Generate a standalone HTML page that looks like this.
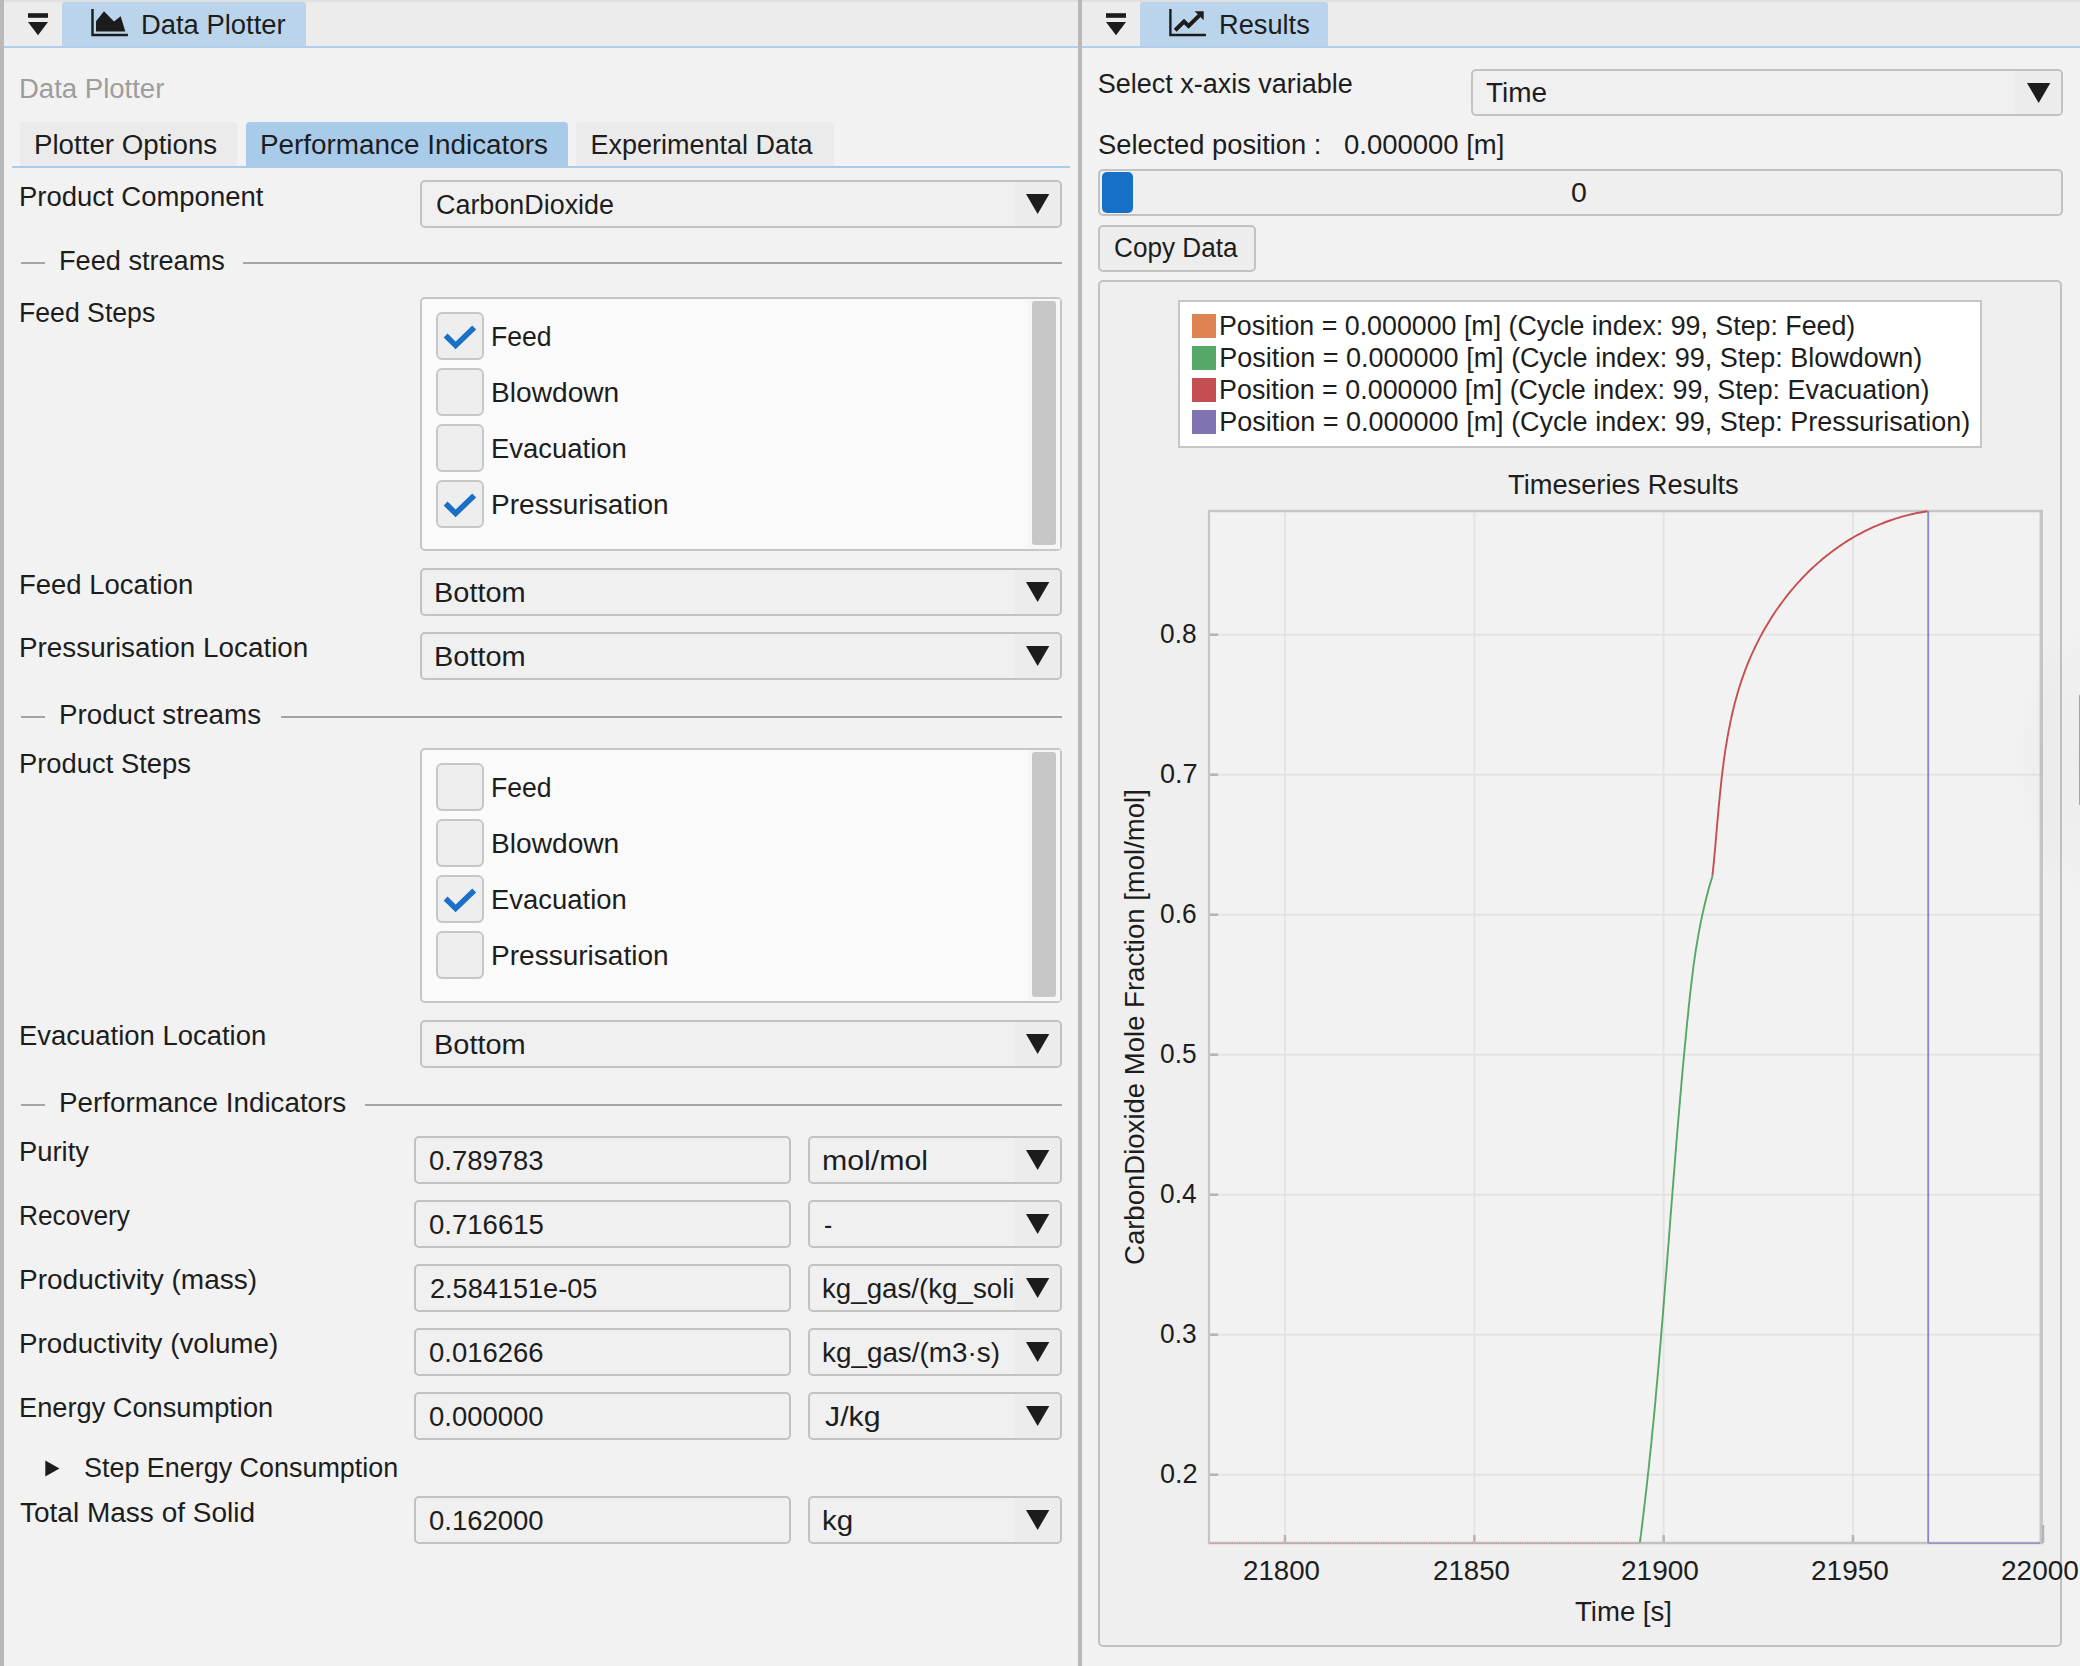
<!DOCTYPE html><html><head><meta charset="utf-8"><style>
html,body{margin:0;padding:0;width:2080px;height:1666px;overflow:hidden;background:#f2f2f2;position:relative;}
.t{position:absolute;font-family:"Liberation Sans",sans-serif;font-size:27px;line-height:30px;white-space:pre;color:#1d1d1d;transform-origin:0 0;}
</style></head><body>
<div style="position:absolute;left:0px;top:0px;width:2080px;height:46px;background:#ececec;"></div>
<div style="position:absolute;left:0px;top:0px;width:2080px;height:1.5px;background:#e0e0e0;"></div>
<div style="position:absolute;left:0px;top:46px;width:2080px;height:2px;background:#b0cfea;"></div>
<div style="position:absolute;left:0px;top:0px;width:3.5px;height:1666px;background:#b9b9b9;"></div>
<div style="position:absolute;left:1078px;top:0px;width:3.7px;height:1666px;background:#b9b9b9;"></div>
<svg width="20" height="24" viewBox="0 0 20 24" style="position:absolute;left:28px;top:13px"><rect x="0" y="0.2" width="20" height="4.6" fill="#1c1c1c"/><path d="M0 9H20L10 22.2Z" fill="#1c1c1c"/></svg>
<div style="position:absolute;left:62px;top:2px;width:244px;height:44px;background:#bad5eb;border-radius:3px 3px 0 0;"></div>
<svg width="40" height="30" viewBox="0 0 40 30" style="position:absolute;left:90px;top:8px"><path d="M2.5 1V27H37.9" fill="none" stroke="#1c1c1c" stroke-width="2.4"/><path d="M6 13.3L14 3.25L24 13.6L30.7 8.2L35.3 23.4H6Z" fill="#1c1c1c"/></svg>
<span class="t" style="left:140.97px;top:9.70px;transform:scaleX(1.0143);">Data Plotter</span>
<svg width="20" height="24" viewBox="0 0 20 24" style="position:absolute;left:1106px;top:13px"><rect x="0" y="0.2" width="20" height="4.6" fill="#1c1c1c"/><path d="M0 9H20L10 22.2Z" fill="#1c1c1c"/></svg>
<div style="position:absolute;left:1140px;top:2px;width:188px;height:44px;background:#bad5eb;border-radius:3px 3px 0 0;"></div>
<svg width="40" height="30" viewBox="0 0 40 30" style="position:absolute;left:1168px;top:8px"><path d="M2.4 1V27H37.9" fill="none" stroke="#1c1c1c" stroke-width="2.4"/><path d="M7.2 22.2L16 13.6L20.6 18L31.2 7.6" fill="none" stroke="#1c1c1c" stroke-width="4"/><path d="M26.6 3.2H35.7V12.3Z" fill="#1c1c1c"/></svg>
<span class="t" style="left:1218.98px;top:9.70px;transform:scaleX(1.0080);">Results</span>
<span class="t" style="left:18.76px;top:73.70px;color:#9d9d9d;transform:scaleX(1.0193);">Data Plotter</span>
<div style="position:absolute;left:20px;top:122px;width:217px;height:44px;background:#ebebeb;border-radius:4px 4px 0 0;"></div>
<div style="position:absolute;left:246px;top:122px;width:322px;height:44px;background:#a9cbea;border-radius:4px 4px 0 0;"></div>
<div style="position:absolute;left:576px;top:122px;width:258px;height:44px;background:#ebebeb;border-radius:4px 4px 0 0;"></div>
<div style="position:absolute;left:12px;top:166px;width:1058px;height:2px;background:#abcce9;"></div>
<span class="t" style="left:34.25px;top:130.10px;transform:scaleX(1.0256);">Plotter Options</span>
<span class="t" style="left:260.14px;top:130.10px;transform:scaleX(1.0319);">Performance Indicators</span>
<span class="t" style="left:590.50px;top:130.10px;">Experimental Data</span>
<span class="t" style="left:18.76px;top:182.00px;transform:scaleX(1.0176);">Product Component</span>
<div style="position:absolute;left:420px;top:180px;width:642px;height:48px;box-sizing:border-box;border:2px solid #c2c2c2;border-radius:5px;background:#f0f0f0;"></div>
<div style="position:absolute;left:1014px;top:182px;width:46px;height:44px;background:#ececec;border-radius:0 3px 3px 0;"></div>
<svg width="24" height="21" viewBox="0 0 24 21" style="position:absolute;left:1026.4px;top:194.2px"><path d="M0 0H23.3L11.65 20Z" fill="#1c1c1c"/></svg>
<span class="t" style="left:435.50px;top:189.60px;transform:scaleX(0.9966);">CarbonDioxide</span>
<div style="position:absolute;left:21px;top:261.7px;width:24px;height:2px;background:#a4a4a4;"></div>
<span class="t" style="left:58.99px;top:246.30px;transform:scaleX(1.0049);">Feed streams</span>
<div style="position:absolute;left:243px;top:261.7px;width:819px;height:2px;background:#a4a4a4;"></div>
<span class="t" style="left:18.83px;top:297.60px;transform:scaleX(0.9867);">Feed Steps</span>
<div style="position:absolute;left:420px;top:297px;width:642px;height:254px;box-sizing:border-box;border:2px solid #c6c6c6;border-radius:5px;background:#fafafa;"></div>
<div style="position:absolute;left:1028px;top:299px;width:32px;height:250px;background:#f6f6f6;"></div>
<div style="position:absolute;left:1032px;top:301px;width:24px;height:244px;background:#c7c7c7;border-radius:3px;"></div>
<div style="position:absolute;left:436px;top:312px;width:47.5px;height:47.5px;box-sizing:border-box;border:2px solid #c6c6c6;border-radius:6px;background:#eeeeee;"></div>
<svg width="48" height="48" viewBox="0 0 48 48" style="position:absolute;left:436px;top:312px"><path d="M9.6 23.6L19.6 33.4L38.2 15.4" fill="none" stroke="#1a6fc7" stroke-width="5.6"/></svg>
<span class="t" style="left:490.93px;top:321.80px;transform:scaleX(0.9845);">Feed</span>
<div style="position:absolute;left:436px;top:368px;width:47.5px;height:47.5px;box-sizing:border-box;border:2px solid #c6c6c6;border-radius:6px;background:#eeeeee;"></div>
<span class="t" style="left:490.82px;top:377.80px;transform:scaleX(1.0420);">Blowdown</span>
<div style="position:absolute;left:436px;top:424px;width:47.5px;height:47.5px;box-sizing:border-box;border:2px solid #c6c6c6;border-radius:6px;background:#eeeeee;"></div>
<span class="t" style="left:490.87px;top:433.80px;transform:scaleX(1.0162);">Evacuation</span>
<div style="position:absolute;left:436px;top:480px;width:47.5px;height:47.5px;box-sizing:border-box;border:2px solid #c6c6c6;border-radius:6px;background:#eeeeee;"></div>
<svg width="48" height="48" viewBox="0 0 48 48" style="position:absolute;left:436px;top:480px"><path d="M9.6 23.6L19.6 33.4L38.2 15.4" fill="none" stroke="#1a6fc7" stroke-width="5.6"/></svg>
<span class="t" style="left:490.82px;top:489.80px;transform:scaleX(1.0383);">Pressurisation</span>
<span class="t" style="left:18.76px;top:569.70px;transform:scaleX(1.0180);">Feed Location</span>
<div style="position:absolute;left:420px;top:568px;width:642px;height:48px;box-sizing:border-box;border:2px solid #c2c2c2;border-radius:5px;background:#f0f0f0;"></div>
<div style="position:absolute;left:1014px;top:570px;width:46px;height:44px;background:#ececec;border-radius:0 3px 3px 0;"></div>
<svg width="24" height="21" viewBox="0 0 24 21" style="position:absolute;left:1026.4px;top:582.2px"><path d="M0 0H23.3L11.65 20Z" fill="#1c1c1c"/></svg>
<span class="t" style="left:434.36px;top:577.60px;transform:scaleX(1.0720);">Bottom</span>
<span class="t" style="left:18.74px;top:633.30px;transform:scaleX(1.0307);">Pressurisation Location</span>
<div style="position:absolute;left:420px;top:632px;width:642px;height:48px;box-sizing:border-box;border:2px solid #c2c2c2;border-radius:5px;background:#f0f0f0;"></div>
<div style="position:absolute;left:1014px;top:634px;width:46px;height:44px;background:#ececec;border-radius:0 3px 3px 0;"></div>
<svg width="24" height="21" viewBox="0 0 24 21" style="position:absolute;left:1026.4px;top:646.2px"><path d="M0 0H23.3L11.65 20Z" fill="#1c1c1c"/></svg>
<span class="t" style="left:434.36px;top:641.60px;transform:scaleX(1.0720);">Bottom</span>
<div style="position:absolute;left:21px;top:715.7px;width:24px;height:2px;background:#a4a4a4;"></div>
<span class="t" style="left:58.94px;top:700.30px;transform:scaleX(1.0278);">Product streams</span>
<div style="position:absolute;left:281px;top:715.7px;width:781px;height:2px;background:#a4a4a4;"></div>
<span class="t" style="left:18.77px;top:749.40px;transform:scaleX(1.0132);">Product Steps</span>
<div style="position:absolute;left:420px;top:748px;width:642px;height:255px;box-sizing:border-box;border:2px solid #c6c6c6;border-radius:5px;background:#fafafa;"></div>
<div style="position:absolute;left:1028px;top:750px;width:32px;height:251px;background:#f6f6f6;"></div>
<div style="position:absolute;left:1032px;top:752px;width:24px;height:245px;background:#c7c7c7;border-radius:3px;"></div>
<div style="position:absolute;left:436px;top:763px;width:47.5px;height:47.5px;box-sizing:border-box;border:2px solid #c6c6c6;border-radius:6px;background:#eeeeee;"></div>
<span class="t" style="left:490.93px;top:772.80px;transform:scaleX(0.9845);">Feed</span>
<div style="position:absolute;left:436px;top:819px;width:47.5px;height:47.5px;box-sizing:border-box;border:2px solid #c6c6c6;border-radius:6px;background:#eeeeee;"></div>
<span class="t" style="left:490.82px;top:828.80px;transform:scaleX(1.0420);">Blowdown</span>
<div style="position:absolute;left:436px;top:875px;width:47.5px;height:47.5px;box-sizing:border-box;border:2px solid #c6c6c6;border-radius:6px;background:#eeeeee;"></div>
<svg width="48" height="48" viewBox="0 0 48 48" style="position:absolute;left:436px;top:875px"><path d="M9.6 23.6L19.6 33.4L38.2 15.4" fill="none" stroke="#1a6fc7" stroke-width="5.6"/></svg>
<span class="t" style="left:490.87px;top:884.80px;transform:scaleX(1.0162);">Evacuation</span>
<div style="position:absolute;left:436px;top:931px;width:47.5px;height:47.5px;box-sizing:border-box;border:2px solid #c6c6c6;border-radius:6px;background:#eeeeee;"></div>
<span class="t" style="left:490.82px;top:940.80px;transform:scaleX(1.0383);">Pressurisation</span>
<span class="t" style="left:18.97px;top:1021.40px;transform:scaleX(1.0167);">Evacuation Location</span>
<div style="position:absolute;left:420px;top:1020px;width:642px;height:48px;box-sizing:border-box;border:2px solid #c2c2c2;border-radius:5px;background:#f0f0f0;"></div>
<div style="position:absolute;left:1014px;top:1022px;width:46px;height:44px;background:#ececec;border-radius:0 3px 3px 0;"></div>
<svg width="24" height="21" viewBox="0 0 24 21" style="position:absolute;left:1026.4px;top:1034.2px"><path d="M0 0H23.3L11.65 20Z" fill="#1c1c1c"/></svg>
<span class="t" style="left:434.36px;top:1029.60px;transform:scaleX(1.0720);">Bottom</span>
<div style="position:absolute;left:21px;top:1103.8px;width:24px;height:2px;background:#a4a4a4;"></div>
<span class="t" style="left:58.94px;top:1088.40px;transform:scaleX(1.0290);">Performance Indicators</span>
<div style="position:absolute;left:365px;top:1103.8px;width:697px;height:2px;background:#a4a4a4;"></div>
<span class="t" style="left:18.97px;top:1137.20px;transform:scaleX(1.0134);">Purity</span>
<div style="position:absolute;left:414px;top:1136px;width:377px;height:48px;box-sizing:border-box;border:2px solid #c2c2c2;border-radius:5px;background:#f0f0f0;"></div>
<span class="t" style="left:429.48px;top:1145.60px;transform:scaleX(1.0162);">0.789783</span>
<div style="position:absolute;left:808px;top:1136px;width:254px;height:48px;box-sizing:border-box;border:2px solid #c2c2c2;border-radius:5px;background:#f0f0f0;"></div>
<div style="position:absolute;left:1014px;top:1138px;width:46px;height:44px;background:#ececec;border-radius:0 3px 3px 0;"></div>
<svg width="24" height="21" viewBox="0 0 24 21" style="position:absolute;left:1026.4px;top:1150.2px"><path d="M0 0H23.3L11.65 20Z" fill="#1c1c1c"/></svg>
<span class="t" style="left:822.26px;top:1145.60px;transform:scaleX(1.1220);">mol/mol</span>
<span class="t" style="left:19.05px;top:1201.20px;transform:scaleX(0.9732);">Recovery</span>
<div style="position:absolute;left:414px;top:1200px;width:377px;height:48px;box-sizing:border-box;border:2px solid #c2c2c2;border-radius:5px;background:#f0f0f0;"></div>
<span class="t" style="left:429.48px;top:1209.60px;transform:scaleX(1.0198);">0.716615</span>
<div style="position:absolute;left:808px;top:1200px;width:254px;height:48px;box-sizing:border-box;border:2px solid #c2c2c2;border-radius:5px;background:#f0f0f0;"></div>
<div style="position:absolute;left:1014px;top:1202px;width:46px;height:44px;background:#ececec;border-radius:0 3px 3px 0;"></div>
<svg width="24" height="21" viewBox="0 0 24 21" style="position:absolute;left:1026.4px;top:1214.2px"><path d="M0 0H23.3L11.65 20Z" fill="#1c1c1c"/></svg>
<span class="t" style="left:823.59px;top:1209.60px;transform:scaleX(0.9143);">-</span>
<span class="t" style="left:18.93px;top:1265.20px;transform:scaleX(1.0372);">Productivity (mass)</span>
<div style="position:absolute;left:414px;top:1264px;width:377px;height:48px;box-sizing:border-box;border:2px solid #c2c2c2;border-radius:5px;background:#f0f0f0;"></div>
<span class="t" style="left:429.50px;top:1273.60px;transform:scaleX(1.0042);">2.584151e-05</span>
<div style="position:absolute;left:808px;top:1264px;width:254px;height:48px;box-sizing:border-box;border:2px solid #c2c2c2;border-radius:5px;background:#f0f0f0;"></div>
<div style="position:absolute;left:1014px;top:1266px;width:46px;height:44px;background:#ececec;border-radius:0 3px 3px 0;"></div>
<svg width="24" height="21" viewBox="0 0 24 21" style="position:absolute;left:1026.4px;top:1278.2px"><path d="M0 0H23.3L11.65 20Z" fill="#1c1c1c"/></svg>
<span class="t" style="left:822.45px;top:1273.60px;transform:scaleX(1.0261);">kg_gas/(kg_soli</span>
<span class="t" style="left:18.94px;top:1329.20px;transform:scaleX(1.0281);">Productivity (volume)</span>
<div style="position:absolute;left:414px;top:1328px;width:377px;height:48px;box-sizing:border-box;border:2px solid #c2c2c2;border-radius:5px;background:#f0f0f0;"></div>
<span class="t" style="left:429.48px;top:1337.60px;transform:scaleX(1.0162);">0.016266</span>
<div style="position:absolute;left:808px;top:1328px;width:254px;height:48px;box-sizing:border-box;border:2px solid #c2c2c2;border-radius:5px;background:#f0f0f0;"></div>
<div style="position:absolute;left:1014px;top:1330px;width:46px;height:44px;background:#ececec;border-radius:0 3px 3px 0;"></div>
<svg width="24" height="21" viewBox="0 0 24 21" style="position:absolute;left:1026.4px;top:1342.2px"><path d="M0 0H23.3L11.65 20Z" fill="#1c1c1c"/></svg>
<span class="t" style="left:822.44px;top:1337.60px;transform:scaleX(1.0314);">kg_gas/(m3·s)</span>
<span class="t" style="left:18.98px;top:1393.20px;transform:scaleX(1.0081);">Energy Consumption</span>
<div style="position:absolute;left:414px;top:1392px;width:377px;height:48px;box-sizing:border-box;border:2px solid #c2c2c2;border-radius:5px;background:#f0f0f0;"></div>
<span class="t" style="left:429.48px;top:1401.60px;transform:scaleX(1.0162);">0.000000</span>
<div style="position:absolute;left:808px;top:1392px;width:254px;height:48px;box-sizing:border-box;border:2px solid #c2c2c2;border-radius:5px;background:#f0f0f0;"></div>
<div style="position:absolute;left:1014px;top:1394px;width:46px;height:44px;background:#ececec;border-radius:0 3px 3px 0;"></div>
<svg width="24" height="21" viewBox="0 0 24 21" style="position:absolute;left:1026.4px;top:1406.2px"><path d="M0 0H23.3L11.65 20Z" fill="#1c1c1c"/></svg>
<span class="t" style="left:824.50px;top:1401.60px;transform:scaleX(1.1208);">J/kg</span>
<svg width="16" height="18" viewBox="0 0 16 18" style="position:absolute;left:44.5px;top:1459.5px"><path d="M0.3 0.5L14.5 8.5L0.3 16.5Z" fill="#1c1c1c"/></svg>
<span class="t" style="left:83.80px;top:1453.30px;transform:scaleX(0.9968);">Step Energy Consumption</span>
<span class="t" style="left:19.96px;top:1497.70px;transform:scaleX(1.0375);">Total Mass of Solid</span>
<div style="position:absolute;left:414px;top:1496px;width:377px;height:48px;box-sizing:border-box;border:2px solid #c2c2c2;border-radius:5px;background:#f0f0f0;"></div>
<span class="t" style="left:429.48px;top:1505.60px;transform:scaleX(1.0162);">0.162000</span>
<div style="position:absolute;left:808px;top:1496px;width:254px;height:48px;box-sizing:border-box;border:2px solid #c2c2c2;border-radius:5px;background:#f0f0f0;"></div>
<div style="position:absolute;left:1014px;top:1498px;width:46px;height:44px;background:#ececec;border-radius:0 3px 3px 0;"></div>
<svg width="24" height="21" viewBox="0 0 24 21" style="position:absolute;left:1026.4px;top:1510.2px"><path d="M0 0H23.3L11.65 20Z" fill="#1c1c1c"/></svg>
<span class="t" style="left:822.32px;top:1505.60px;transform:scaleX(1.0920);">kg</span>
<span class="t" style="left:1097.70px;top:69.30px;">Select x-axis variable</span>
<div style="position:absolute;left:1470.5px;top:68.5px;width:592.5px;height:47px;box-sizing:border-box;border:2px solid #c2c2c2;border-radius:5px;background:#f0f0f0;"></div>
<div style="position:absolute;left:2015.0px;top:70.5px;width:46px;height:43px;background:#ececec;border-radius:0 3px 3px 0;"></div>
<svg width="24" height="21" viewBox="0 0 24 21" style="position:absolute;left:2027.4px;top:82.7px"><path d="M0 0H23.3L11.65 20Z" fill="#1c1c1c"/></svg>
<span class="t" style="left:1485.96px;top:78.10px;transform:scaleX(1.0351);">Time</span>
<span class="t" style="left:1097.69px;top:129.80px;transform:scaleX(1.0128);">Selected position :</span>
<span class="t" style="left:1343.68px;top:129.80px;transform:scaleX(1.0174);">0.000000 [m]</span>
<div style="position:absolute;left:1098px;top:168.5px;width:965px;height:47.5px;box-sizing:border-box;border:2px solid #c2c2c2;border-radius:5px;background:#efefef;"></div>
<div style="position:absolute;left:1102px;top:172px;width:31px;height:40.5px;background:#1670c5;border-radius:5px;"></div>
<span class="t" style="left:1571.45px;top:177.60px;transform:scaleX(1.0538);">0</span>
<div style="position:absolute;left:1098px;top:224.5px;width:157.5px;height:47px;box-sizing:border-box;border:2px solid #c2c2c2;border-radius:5px;background:#ededed;"></div>
<span class="t" style="left:1113.83px;top:233.40px;transform:scaleX(0.9685);">Copy Data</span>
<div style="position:absolute;left:1098px;top:279.5px;width:964px;height:1367px;box-sizing:border-box;border:2px solid #c2c2c2;border-radius:5px;background:#efefef;"></div>
<div style="position:absolute;left:1177.5px;top:300px;width:804px;height:147.5px;box-sizing:border-box;border:2px solid #c6c6c6;background:#ffffff;"></div>
<div style="position:absolute;left:1192.3px;top:314px;width:23.5px;height:23.5px;background:#dd8452;"></div>
<span class="t" style="left:1219.22px;top:311.40px;transform:scaleX(0.9917);">Position = 0.000000 [m] (Cycle index: 99, Step: Feed)</span>
<div style="position:absolute;left:1192.3px;top:346px;width:23.5px;height:23.5px;background:#55a868;"></div>
<span class="t" style="left:1219.20px;top:343.40px;">Position = 0.000000 [m] (Cycle index: 99, Step: Blowdown)</span>
<div style="position:absolute;left:1192.3px;top:378px;width:23.5px;height:23.5px;background:#c44e52;"></div>
<span class="t" style="left:1219.21px;top:375.40px;transform:scaleX(0.9956);">Position = 0.000000 [m] (Cycle index: 99, Step: Evacuation)</span>
<div style="position:absolute;left:1192.3px;top:410px;width:23.5px;height:23.5px;background:#8172b3;"></div>
<span class="t" style="left:1219.20px;top:407.40px;">Position = 0.000000 [m] (Cycle index: 99, Step: Pressurisation)</span>
<span class="t" style="left:1507.79px;top:469.60px;transform:scaleX(1.0093);">Timeseries Results</span>
<svg width="2080" height="1666" viewBox="0 0 2080 1666" style="position:absolute;left:0;top:0"><rect x="1208.2" y="511" width="834.8" height="1032" fill="#f2f2f2"/><line x1="1285.0" y1="511" x2="1285.0" y2="1543" stroke="#e4e4e4" stroke-width="2"/><line x1="1474.33" y1="511" x2="1474.33" y2="1543" stroke="#e4e4e4" stroke-width="2"/><line x1="1663.66" y1="511" x2="1663.66" y2="1543" stroke="#e4e4e4" stroke-width="2"/><line x1="1852.99" y1="511" x2="1852.99" y2="1543" stroke="#e4e4e4" stroke-width="2"/><line x1="1208.2" y1="634.7" x2="2043" y2="634.7" stroke="#e4e4e4" stroke-width="2"/><line x1="1208.2" y1="634.7" x2="1218.2" y2="634.7" stroke="#b4b4b4" stroke-width="2.5"/><line x1="1208.2" y1="774.7" x2="2043" y2="774.7" stroke="#e4e4e4" stroke-width="2"/><line x1="1208.2" y1="774.7" x2="1218.2" y2="774.7" stroke="#b4b4b4" stroke-width="2.5"/><line x1="1208.2" y1="914.7" x2="2043" y2="914.7" stroke="#e4e4e4" stroke-width="2"/><line x1="1208.2" y1="914.7" x2="1218.2" y2="914.7" stroke="#b4b4b4" stroke-width="2.5"/><line x1="1208.2" y1="1054.7" x2="2043" y2="1054.7" stroke="#e4e4e4" stroke-width="2"/><line x1="1208.2" y1="1054.7" x2="1218.2" y2="1054.7" stroke="#b4b4b4" stroke-width="2.5"/><line x1="1208.2" y1="1194.7" x2="2043" y2="1194.7" stroke="#e4e4e4" stroke-width="2"/><line x1="1208.2" y1="1194.7" x2="1218.2" y2="1194.7" stroke="#b4b4b4" stroke-width="2.5"/><line x1="1208.2" y1="1334.7" x2="2043" y2="1334.7" stroke="#e4e4e4" stroke-width="2"/><line x1="1208.2" y1="1334.7" x2="1218.2" y2="1334.7" stroke="#b4b4b4" stroke-width="2.5"/><line x1="1208.2" y1="1474.7" x2="2043" y2="1474.7" stroke="#e4e4e4" stroke-width="2"/><line x1="1208.2" y1="1474.7" x2="1218.2" y2="1474.7" stroke="#b4b4b4" stroke-width="2.5"/><line x1="1285.0" y1="1535" x2="1285.0" y2="1543" stroke="#b4b4b4" stroke-width="2.5"/><line x1="1474.33" y1="1535" x2="1474.33" y2="1543" stroke="#b4b4b4" stroke-width="2.5"/><line x1="1663.66" y1="1535" x2="1663.66" y2="1543" stroke="#b4b4b4" stroke-width="2.5"/><line x1="1852.99" y1="1535" x2="1852.99" y2="1543" stroke="#b4b4b4" stroke-width="2.5"/><path d="M1208.2 511H2043" stroke="#c6c6c6" stroke-width="2.4"/><path d="M1209.0 511V1543" stroke="#c6c6c6" stroke-width="2.2"/><path d="M1208.2 1543H2043" stroke="#c2c2c2" stroke-width="2.4"/><path d="M2041.3 511V1543" stroke="#c6c6c6" stroke-width="3.4"/><path d="M2043 1525V1543" stroke="#b4b4b4" stroke-width="2.5"/><path d="M1210.2 1543.3H1640" stroke="#e07a7a" stroke-width="1.1" stroke-dasharray="1.2 1.2"/><path d="M1639.9 1542.5 L1640.4 1538.3 L1641.0 1534.2 L1641.5 1530.0 L1642.0 1525.8 L1642.5 1521.7 L1643.0 1517.5 L1643.5 1513.3 L1644.0 1509.1 L1644.5 1505.0 L1645.0 1500.8 L1645.5 1496.6 L1646.0 1492.4 L1646.5 1488.2 L1646.9 1484.1 L1647.4 1479.9 L1647.8 1475.7 L1648.3 1471.5 L1648.8 1467.3 L1649.2 1463.1 L1649.6 1458.9 L1650.1 1454.7 L1650.5 1450.5 L1651.0 1446.3 L1651.4 1442.1 L1651.8 1437.9 L1652.2 1433.7 L1652.6 1429.5 L1653.1 1425.3 L1653.5 1421.1 L1653.9 1416.9 L1654.3 1412.7 L1654.7 1408.5 L1655.1 1404.3 L1655.5 1400.1 L1655.8 1395.9 L1656.2 1391.7 L1656.6 1387.5 L1657.0 1383.2 L1657.4 1379.0 L1657.7 1374.8 L1658.1 1370.6 L1658.5 1366.4 L1658.9 1362.2 L1659.2 1358.0 L1659.6 1353.7 L1659.9 1349.5 L1660.3 1345.3 L1660.7 1341.1 L1661.0 1336.9 L1661.4 1332.7 L1661.7 1328.4 L1662.1 1324.2 L1662.4 1320.0 L1662.8 1315.8 L1663.1 1311.5 L1663.4 1307.3 L1663.8 1303.1 L1664.1 1298.9 L1664.5 1294.7 L1664.8 1290.4 L1665.1 1286.2 L1665.5 1282.0 L1665.8 1277.8 L1666.1 1273.5 L1666.5 1269.3 L1666.8 1265.1 L1667.1 1260.9 L1667.5 1256.6 L1667.8 1252.4 L1668.1 1248.2 L1668.5 1244.0 L1668.8 1239.7 L1669.1 1235.5 L1669.4 1231.3 L1669.8 1227.1 L1670.1 1222.9 L1670.4 1218.6 L1670.7 1214.4 L1671.1 1210.2 L1671.4 1206.0 L1671.7 1201.7 L1672.1 1197.5 L1672.4 1193.3 L1672.7 1189.1 L1673.1 1184.9 L1673.4 1180.6 L1673.7 1176.4 L1674.1 1172.2 L1674.4 1168.0 L1674.7 1163.8 L1675.1 1159.6 L1675.4 1155.3 L1675.7 1151.1 L1676.1 1146.9 L1676.4 1142.7 L1676.8 1138.5 L1677.1 1134.3 L1677.5 1130.1 L1677.8 1125.8 L1678.2 1121.6 L1678.5 1117.4 L1678.9 1113.2 L1679.2 1109.0 L1679.6 1104.8 L1680.0 1100.6 L1680.3 1096.4 L1680.7 1092.2 L1681.1 1088.0 L1681.4 1083.8 L1681.8 1079.6 L1682.2 1075.4 L1682.5 1071.2 L1682.9 1067.0 L1683.3 1062.8 L1683.7 1058.6 L1684.1 1054.4 L1684.5 1050.2 L1684.9 1046.0 L1685.3 1041.9 L1685.7 1037.7 L1686.1 1033.5 L1686.5 1029.3 L1686.9 1025.1 L1687.3 1020.9 L1687.8 1016.8 L1688.2 1012.6 L1688.6 1008.4 L1689.0 1004.2 L1689.5 1000.1 L1689.9 995.9 L1690.4 991.7 L1690.9 987.6 L1691.4 983.4 L1691.9 979.2 L1692.4 975.1 L1692.9 970.9 L1693.4 966.7 L1694.0 962.6 L1694.6 958.4 L1695.2 954.3 L1695.8 950.1 L1696.5 946.0 L1697.2 941.8 L1697.9 937.7 L1698.6 933.6 L1699.4 929.4 L1700.2 925.3 L1701.0 921.1 L1701.9 917.0 L1702.8 912.9 L1703.7 908.7 L1704.7 904.6 L1705.7 900.5 L1706.7 896.4 L1707.8 892.3 L1708.9 888.1 L1710.1 884.0 L1711.3 879.9 L1712.6 875.8" fill="none" stroke="#55a868" stroke-width="1.9" stroke-linejoin="round"/><path d="M1712.4 875.6 L1712.7 872.8 L1713.0 870.0 L1713.3 867.2 L1713.6 864.4 L1713.9 861.6 L1714.1 858.7 L1714.4 855.9 L1714.7 853.1 L1714.9 850.2 L1715.2 847.4 L1715.4 844.5 L1715.7 841.6 L1715.9 838.8 L1716.2 835.9 L1716.4 833.0 L1716.7 830.1 L1716.9 827.2 L1717.2 824.3 L1717.4 821.4 L1717.7 818.5 L1718.0 815.6 L1718.2 812.7 L1718.5 809.8 L1718.7 806.8 L1719.0 803.9 L1719.3 801.0 L1719.6 798.1 L1719.9 795.2 L1720.2 792.2 L1720.5 789.3 L1720.8 786.4 L1721.1 783.4 L1721.4 780.5 L1721.7 777.6 L1722.1 774.7 L1722.4 771.7 L1722.8 768.8 L1723.2 765.9 L1723.5 762.9 L1723.9 760.0 L1724.3 757.1 L1724.8 754.2 L1725.2 751.3 L1725.6 748.3 L1726.1 745.4 L1726.6 742.5 L1727.1 739.6 L1727.6 736.7 L1728.1 733.8 L1728.6 730.9 L1729.2 728.0 L1729.8 725.2 L1730.3 722.3 L1731.0 719.4 L1731.6 716.5 L1732.2 713.7 L1732.9 710.8 L1733.6 708.0 L1734.3 705.1 L1735.0 702.3 L1735.8 699.5 L1736.6 696.7 L1737.4 693.8 L1738.2 691.0 L1739.0 688.3 L1739.9 685.5 L1740.8 682.7 L1741.7 679.9 L1742.7 677.2 L1743.7 674.4 L1744.7 671.7 L1745.7 668.9 L1746.8 666.2 L1747.8 663.5 L1748.9 660.8 L1750.1 658.1 L1751.2 655.5 L1752.4 652.8 L1753.7 650.2 L1754.9 647.5 L1756.2 644.9 L1757.5 642.3 L1758.8 639.7 L1760.1 637.1 L1761.5 634.6 L1762.9 632.0 L1764.3 629.5 L1765.8 627.0 L1767.3 624.5 L1768.8 622.0 L1770.3 619.5 L1771.8 617.1 L1773.4 614.6 L1775.0 612.2 L1776.6 609.8 L1778.3 607.5 L1780.0 605.1 L1781.7 602.8 L1783.4 600.5 L1785.1 598.2 L1786.9 595.9 L1788.7 593.6 L1790.5 591.4 L1792.4 589.2 L1794.2 587.0 L1796.1 584.8 L1798.0 582.7 L1800.0 580.6 L1801.9 578.5 L1803.9 576.4 L1805.9 574.3 L1807.9 572.3 L1810.0 570.3 L1812.1 568.3 L1814.2 566.4 L1816.3 564.5 L1818.4 562.6 L1820.6 560.7 L1822.8 558.8 L1825.0 557.0 L1827.2 555.2 L1829.5 553.5 L1831.8 551.7 L1834.1 550.0 L1836.4 548.4 L1838.7 546.7 L1841.1 545.1 L1843.5 543.5 L1845.9 541.9 L1848.3 540.4 L1850.8 538.9 L1853.2 537.5 L1855.7 536.0 L1858.2 534.6 L1860.8 533.3 L1863.3 531.9 L1865.9 530.6 L1868.5 529.4 L1871.1 528.1 L1873.7 526.9 L1876.4 525.8 L1879.1 524.7 L1881.8 523.6 L1884.5 522.5 L1887.2 521.5 L1890.0 520.5 L1892.7 519.6 L1895.5 518.6 L1898.3 517.8 L1901.2 516.9 L1904.0 516.1 L1906.9 515.4 L1909.8 514.7 L1912.7 514.0 L1915.6 513.3 L1918.6 512.7 L1921.5 512.2 L1924.5 511.7 L1927.5 511.2" fill="none" stroke="#c44e52" stroke-width="1.9" stroke-linejoin="round"/><path d="M1928.2 511V1543" fill="none" stroke="#8a88c3" stroke-width="1.8"/><path d="M1928.2 1543.2H2040" fill="none" stroke="#8f89c0" stroke-width="1.3"/></svg>
<span class="t" style="left:1159.53px;top:619.40px;transform:scaleX(0.9750);">0.8</span>
<span class="t" style="left:1159.50px;top:759.40px;transform:scaleX(1.0029);">0.7</span>
<span class="t" style="left:1159.53px;top:899.40px;transform:scaleX(0.9750);">0.6</span>
<span class="t" style="left:1159.53px;top:1039.40px;transform:scaleX(0.9750);">0.5</span>
<span class="t" style="left:1159.53px;top:1179.40px;transform:scaleX(0.9750);">0.4</span>
<span class="t" style="left:1159.53px;top:1319.40px;transform:scaleX(0.9750);">0.3</span>
<span class="t" style="left:1159.50px;top:1459.40px;transform:scaleX(1.0029);">0.2</span>
<span class="t" style="left:1243.48px;top:1555.60px;transform:scaleX(1.0247);">21800</span>
<span class="t" style="left:1433.48px;top:1555.60px;transform:scaleX(1.0247);">21850</span>
<span class="t" style="left:1620.96px;top:1555.60px;transform:scaleX(1.0384);">21900</span>
<span class="t" style="left:1810.96px;top:1555.60px;transform:scaleX(1.0370);">21950</span>
<span class="t" style="left:2000.86px;top:1555.60px;transform:scaleX(1.0370);">22000</span>
<span class="t" style="left:1575.48px;top:1597.20px;transform:scaleX(1.0207);">Time [s]</span>
<span class="t" style="left:1119.90px;top:1265.42px;transform:rotate(-90deg) scaleX(1.0197);">CarbonDioxide Mole Fraction [mol/mol]</span>
<div style="position:absolute;left:2012px;top:620px;width:136px;height:280px;background:radial-gradient(ellipse closest-side at center, rgba(0,0,0,0.018) 0%, rgba(0,0,0,0.012) 75%, rgba(0,0,0,0) 100%);"></div>
<div style="position:absolute;left:2078.5px;top:695px;width:1.5px;height:110px;background:#a5a5a5;"></div>
</body></html>
